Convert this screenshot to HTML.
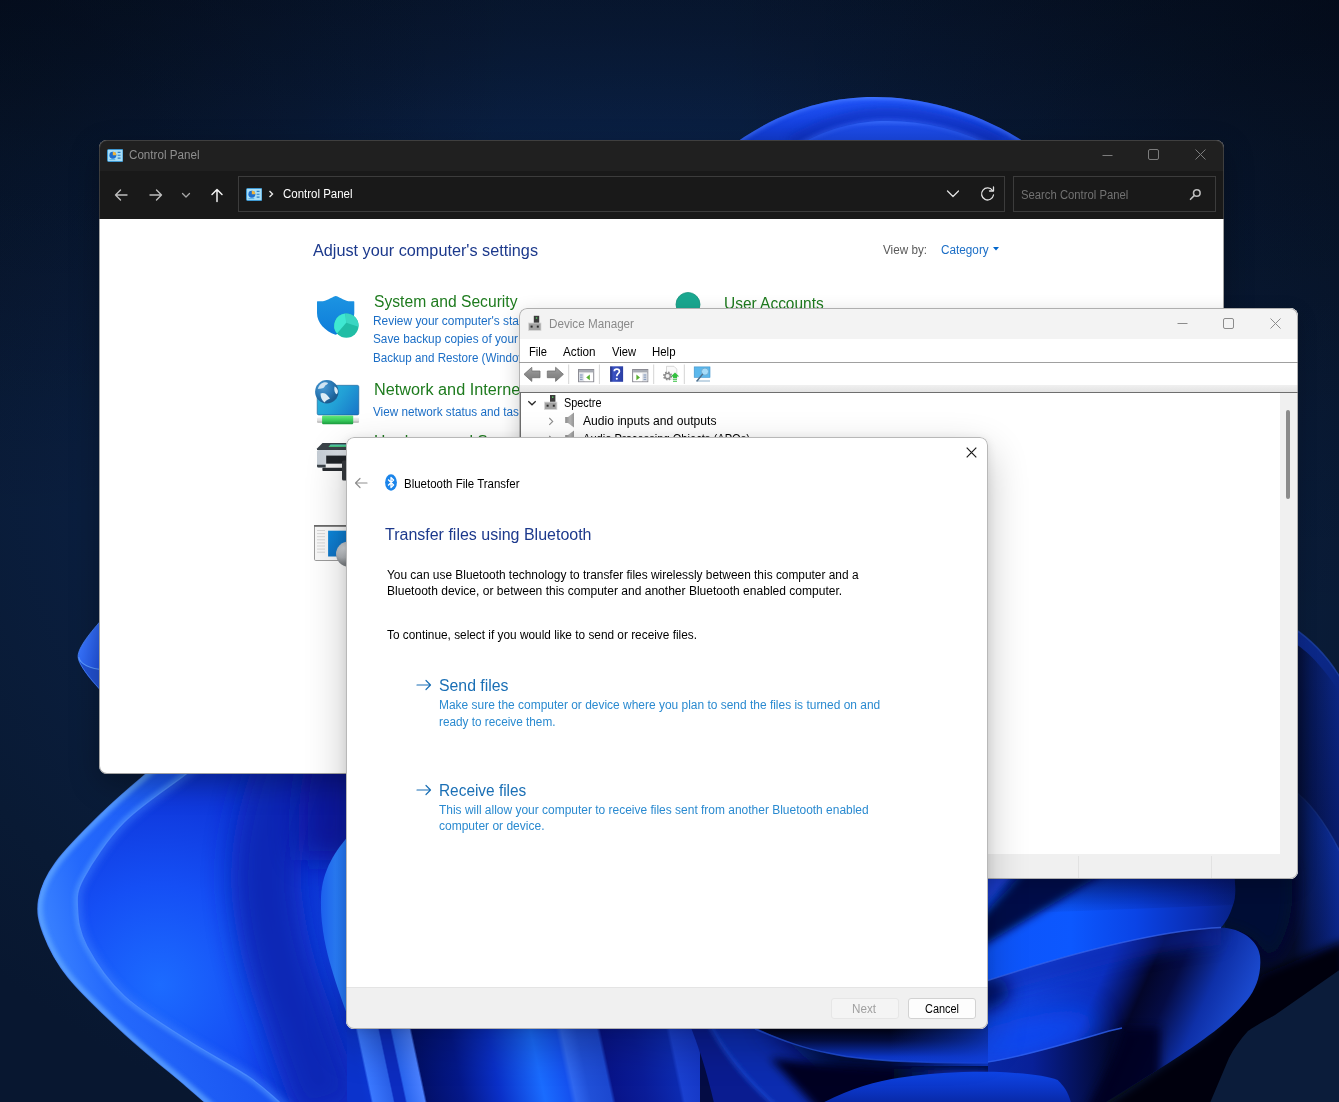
<!DOCTYPE html>
<html><head><meta charset="utf-8"><title>Desktop</title>
<style>
html,body{margin:0;padding:0;background:#05102a;}
body{width:1339px;height:1102px;overflow:hidden;font-family:"Liberation Sans",sans-serif;}
#desk{position:relative;width:1339px;height:1102px;overflow:hidden;}
.t{position:absolute;white-space:nowrap;display:inline-block;transform-origin:0 50%;font-family:"Liberation Sans",sans-serif;}
.win{position:absolute;overflow:hidden;box-sizing:border-box;}
.abs{position:absolute;}
#cp{left:99px;top:140px;width:1125px;height:634px;border-radius:8px;background:#fff;box-shadow:0 10px 30px rgba(0,0,0,.30);}
#dm{left:519px;top:308px;width:779px;height:571px;border-radius:8px;background:#fff;box-shadow:0 6px 20px rgba(0,0,0,.20);}
#dlg{left:346px;top:437px;width:641.500px;height:592px;border-radius:8px;background:#fff;box-shadow:0 16px 40px rgba(0,0,0,.24),0 2px 10px rgba(0,0,0,.10);}
.ring{position:absolute;left:0;top:0;right:0;bottom:0;border-radius:8px;pointer-events:none;}
#cp .ring{box-shadow:inset 0 0 0 1px rgba(90,90,90,.55);}
#dm .ring{box-shadow:inset 0 0 0 1px rgba(130,130,130,.60);}
#dlg .ring{box-shadow:inset 0 0 0 1px rgba(125,125,125,.55);}

</style></head>
<body>
<div id="desk">
<svg id="wall" width="1339" height="1102" viewBox="0 0 1339 1102" style="position:absolute;left:0;top:0">
<defs>
  <radialGradient id="bg" cx="640" cy="470" r="900" gradientUnits="userSpaceOnUse" gradientTransform="translate(640 470) scale(1 0.8) translate(-640 -470)">
    <stop offset="0" stop-color="#0d3068"/><stop offset="0.3" stop-color="#0b2856"/><stop offset="0.62" stop-color="#0a1e3e"/><stop offset="0.85" stop-color="#091a34"/><stop offset="1" stop-color="#081730"/>
  </radialGradient>
  <linearGradient id="bgtop" x1="0" y1="0" x2="0" y2="420" gradientUnits="userSpaceOnUse">
    <stop offset="0" stop-color="#01040c" stop-opacity="0.30"/><stop offset="0.35" stop-color="#01040c" stop-opacity="0.10"/><stop offset="1" stop-color="#01040c" stop-opacity="0"/>
  </linearGradient>
  <radialGradient id="bgcorner" cx="0" cy="0" r="520" gradientUnits="userSpaceOnUse">
    <stop offset="0" stop-color="#01040c" stop-opacity="0.36"/><stop offset="1" stop-color="#01040c" stop-opacity="0"/>
  </radialGradient>
  <radialGradient id="bgcorner2" cx="1339" cy="0" r="620" gradientUnits="userSpaceOnUse">
    <stop offset="0" stop-color="#01040c" stop-opacity="0.42"/><stop offset="1" stop-color="#01040c" stop-opacity="0"/>
  </radialGradient>
  <linearGradient id="topA" x1="0" y1="95" x2="0" y2="150" gradientUnits="userSpaceOnUse">
    <stop offset="0" stop-color="#3a70ff"/><stop offset="0.12" stop-color="#1f52f5"/><stop offset="0.6" stop-color="#1440dc"/><stop offset="1" stop-color="#0f36c4"/>
  </linearGradient>
  <linearGradient id="topB" x1="0" y1="119" x2="0" y2="150" gradientUnits="userSpaceOnUse">
    <stop offset="0" stop-color="#3568fa"/><stop offset="0.25" stop-color="#1d4ce8"/><stop offset="1" stop-color="#1642d8"/>
  </linearGradient>
  <linearGradient id="pl1" x1="36" y1="900" x2="200" y2="860" gradientUnits="userSpaceOnUse">
    <stop offset="0" stop-color="#3a82ff"/><stop offset="0.3" stop-color="#2469fc"/><stop offset="1" stop-color="#1a56f2"/>
  </linearGradient>
  <radialGradient id="pl2" cx="160" cy="985" r="250" gradientUnits="userSpaceOnUse">
    <stop offset="0" stop-color="#1c6bff"/><stop offset="0.4" stop-color="#154ff5"/><stop offset="0.75" stop-color="#0f38dc"/><stop offset="1" stop-color="#0b2bc0"/>
  </radialGradient>
  <!-- right group -->
  <linearGradient id="rA" x1="980" y1="0" x2="1240" y2="0" gradientUnits="userSpaceOnUse">
    <stop offset="0" stop-color="#0d54fa"/><stop offset="0.35" stop-color="#0c58ff"/><stop offset="0.6" stop-color="#0a44e6"/><stop offset="0.85" stop-color="#0a2cb0"/><stop offset="1" stop-color="#07207e"/>
  </linearGradient>
  <linearGradient id="rAv" x1="0" y1="876" x2="0" y2="915" gradientUnits="userSpaceOnUse">
    <stop offset="0" stop-color="#04105a" stop-opacity="0.65"/><stop offset="1" stop-color="#04105a" stop-opacity="0"/>
  </linearGradient>
  <linearGradient id="rC" x1="988" y1="960" x2="1217" y2="1063" gradientUnits="userSpaceOnUse">
    <stop offset="0" stop-color="#1646e0"/><stop offset="0.22" stop-color="#1240d8"/><stop offset="0.44" stop-color="#0c30c0"/><stop offset="0.55" stop-color="#061466"/><stop offset="0.61" stop-color="#03062a"/><stop offset="0.71" stop-color="#050c44"/><stop offset="0.855" stop-color="#0e30a8"/><stop offset="0.95" stop-color="#1640c0"/><stop offset="1" stop-color="#1a48cc"/>
  </linearGradient>
  <linearGradient id="rBshade" x1="0" y1="980" x2="0" y2="1062" gradientUnits="userSpaceOnUse">
    <stop offset="0" stop-color="#0a2cb8" stop-opacity="0.55"/><stop offset="0.35" stop-color="#0c48f0" stop-opacity="0"/><stop offset="0.8" stop-color="#0c4cf5" stop-opacity="0.6"/><stop offset="1" stop-color="#0c4cf5" stop-opacity="0.35"/>
  </linearGradient>
  <linearGradient id="ribbon" x1="0" y1="1028" x2="0" y2="1064" gradientUnits="userSpaceOnUse">
    <stop offset="0" stop-color="#020418"/><stop offset="0.35" stop-color="#04104a"/><stop offset="0.8" stop-color="#0c38d0"/><stop offset="1" stop-color="#1446e0"/>
  </linearGradient>
  <linearGradient id="under" x1="800" y1="0" x2="1110" y2="0" gradientUnits="userSpaceOnUse">
    <stop offset="0" stop-color="#020620"/><stop offset="0.3" stop-color="#020620"/><stop offset="0.5" stop-color="#0a2cb0"/><stop offset="0.75" stop-color="#082098"/><stop offset="1" stop-color="#020830"/>
  </linearGradient>
  <linearGradient id="strips" x1="346" y1="0" x2="720" y2="0" gradientUnits="userSpaceOnUse">
    <stop offset="0" stop-color="#0b33cc"/><stop offset="0.02" stop-color="#0b35d0"/><stop offset="0.026" stop-color="#3a78ff"/><stop offset="0.08" stop-color="#2a60e8"/><stop offset="0.084" stop-color="#0c2cc0"/><stop offset="0.112" stop-color="#0c2cc0"/><stop offset="0.117" stop-color="#2a66f0"/><stop offset="0.164" stop-color="#4a80ff"/><stop offset="0.170" stop-color="#02106a"/><stop offset="0.27" stop-color="#04188a"/><stop offset="0.37" stop-color="#0a30c8"/><stop offset="0.487" stop-color="#1a6cff"/><stop offset="0.555" stop-color="#1552f0"/><stop offset="0.57" stop-color="#3068f0"/><stop offset="0.61" stop-color="#2050d8"/><stop offset="0.665" stop-color="#1c48d0"/><stop offset="0.675" stop-color="#08148a"/><stop offset="0.76" stop-color="#0a1c98"/><stop offset="0.85" stop-color="#0c2ab0"/><stop offset="0.86" stop-color="#1a40d0"/><stop offset="0.925" stop-color="#1436c4"/><stop offset="0.935" stop-color="#0a1c90"/><stop offset="1" stop-color="#0a1c90"/>
  </linearGradient>
  <linearGradient id="rD1" x1="0" y1="620" x2="0" y2="830" gradientUnits="userSpaceOnUse"><stop offset="0" stop-color="#0c2a8c"/><stop offset="1" stop-color="#081c6c"/></linearGradient>
  <linearGradient id="rD2" x1="1339" y1="840" x2="1240" y2="960" gradientUnits="userSpaceOnUse"><stop offset="0" stop-color="#0c2e9c"/><stop offset="0.5" stop-color="#0a2484"/><stop offset="1" stop-color="#06165e"/></linearGradient>
  <linearGradient id="tipg" x1="78" y1="640" x2="104" y2="650" gradientUnits="userSpaceOnUse"><stop offset="0" stop-color="#3a78ff"/><stop offset="1" stop-color="#2458ea"/></linearGradient>
  <linearGradient id="smallp" x1="320" y1="0" x2="350" y2="0" gradientUnits="userSpaceOnUse"><stop offset="0" stop-color="#1c60f2"/><stop offset="0.5" stop-color="#2a80ff"/><stop offset="1" stop-color="#2478fa"/></linearGradient>
  <linearGradient id="rDsh" x1="1294" y1="0" x2="1338" y2="0" gradientUnits="userSpaceOnUse"><stop offset="0" stop-color="#020618" stop-opacity="0.8"/><stop offset="0.4" stop-color="#020618" stop-opacity="0.4"/><stop offset="1" stop-color="#020618" stop-opacity="0"/></linearGradient>
  <linearGradient id="rE" x1="0" y1="1072" x2="0" y2="1104" gradientUnits="userSpaceOnUse"><stop offset="0" stop-color="#0e44e4"/><stop offset="0.5" stop-color="#0b36c8"/><stop offset="1" stop-color="#0828a4"/></linearGradient>
  <linearGradient id="ribfade" x1="890" y1="0" x2="987" y2="0" gradientUnits="userSpaceOnUse"><stop offset="0" stop-color="#1040dc" stop-opacity="0"/><stop offset="1" stop-color="#1040dc" stop-opacity="0.75"/></linearGradient>
  <filter id="b2" filterUnits="userSpaceOnUse" x="-100" y="-100" width="1540" height="1300"><feGaussianBlur stdDeviation="2"/></filter>
  <filter id="b4" filterUnits="userSpaceOnUse" x="-100" y="-100" width="1540" height="1300"><feGaussianBlur stdDeviation="4"/></filter>
  <filter id="b8" filterUnits="userSpaceOnUse" x="-100" y="-100" width="1540" height="1300"><feGaussianBlur stdDeviation="8"/></filter>
  <filter id="b14" filterUnits="userSpaceOnUse" x="-100" y="-100" width="1540" height="1300"><feGaussianBlur stdDeviation="14"/></filter>
  <filter id="b24" filterUnits="userSpaceOnUse" x="-100" y="-100" width="1540" height="1300"><feGaussianBlur stdDeviation="24"/></filter>
  <clipPath id="clTop"><path d="M726 150 C 775 112 826 97 874 97 C 925 97 985 113 1036 150 Z"/></clipPath>
  <clipPath id="clStrips"><rect x="347" y="1000" width="400" height="120"/></clipPath>
  <clipPath id="clFan"><rect x="680" y="1000" width="308" height="120"/></clipPath>
  <clipPath id="cl1"><path d="M175.0 750.0 C 170.2 754.0 158.1 763.5 146.0 774.0 C 133.9 784.5 117.4 798.1 102.4 812.8 C 87.4 827.5 66.5 847.9 55.9 862.4 C 45.3 876.9 40.9 887.8 38.8 899.7 C 36.7 911.6 38.6 920.9 43.5 933.8 C 48.4 946.7 54.9 960.8 68.3 977.3 C 81.7 993.8 104.4 1015.0 124.1 1033.1 C 143.8 1051.2 172.8 1074.4 186.2 1085.9 C 199.6 1097.4 199.8 1097.7 204.8 1102.0 C 209.8 1106.3 214.1 1110.3 216.0 1112.0 L 720 1112 L 720 750 Z"/></clipPath>
  <clipPath id="clA"><path d="M980 870 L 1233 870 C 1236 885 1236 897 1233 905 C 1230 915 1226 922 1221 927.600 C 1168 930 1087 948 980 983 Z"/></clipPath>
  <clipPath id="cl2"><path d="M215.0 750.0 C 210.2 754.0 201.3 762.0 186.2 774.0 C 171.0 786.0 141.2 804.8 124.1 822.1 C 107.0 839.4 91.5 863.4 83.8 877.9 C 76.0 892.4 77.1 897.6 77.6 909.0 C 78.1 920.4 79.2 931.7 86.9 946.2 C 94.7 960.7 107.5 980.4 124.1 995.9 C 140.6 1011.4 165.5 1025.8 186.2 1039.3 C 206.9 1052.8 232.8 1066.1 248.3 1076.6 C 263.8 1087.0 272.2 1096.1 279.3 1102.0 C 286.4 1107.9 289.1 1110.3 291.0 1112.0 L 720 1112 L 720 750 Z"/></clipPath>
  <clipPath id="clC"><path d="M980 983 C 1087 948 1168 930 1221 927.600 C 1240 928 1258 940 1260 956 C 1262 975 1255 990 1248 999 C 1235 1015 1222 1026 1208 1036 C 1190 1050 1150 1075 1106 1102 L 1100 1112 L 980 1112 Z"/></clipPath>
</defs>
<rect width="1339" height="1102" fill="url(#bg)"/>
<rect width="1339" height="420" fill="url(#bgtop)"/>
<rect width="1339" height="1102" fill="url(#bgcorner)"/>
<rect width="1339" height="1102" fill="url(#bgcorner2)"/>
<!-- top bloom -->
<path d="M726 150 C 775 112 826 97 874 97 C 925 97 985 113 1036 150 Z" fill="url(#topA)"/>
<g clip-path="url(#clTop)">
<path d="M726 150 C 775 112 826 97 874 97 C 925 97 985 113 1036 150" fill="none" stroke="#4a7cff" stroke-width="4" filter="url(#b2)" opacity="0.8"/>
<path d="M790 150 C 825 128 858 121 887 121 C 925 121 962 130 1000 150" fill="none" stroke="#0c2cb0" stroke-width="12" filter="url(#b4)" opacity="0.55" transform="translate(0 -7)"/>
<path d="M790 150 C 825 128 858 121 887 121 C 925 121 962 130 1000 150 Z" fill="url(#topB)"/>
<path d="M790 150 C 825 128 858 121 887 121 C 925 121 962 130 1000 150" fill="none" stroke="#4676ff" stroke-width="1.800" filter="url(#b2)" opacity="0.7"/>
</g>
<!-- left small tip -->
<path d="M104 617 C 90 633 78.500 647 78.100 656 C 78 664 88 676 104 694 Z" fill="url(#tipg)"/>
<path d="M79.500 661 C 84 666 92 669 104 670 L 104 694 C 92 682 82 670 79.500 661 Z" fill="#2252d4"/>
<path d="M78.600 657 C 80 664 90 669 104 669.500" fill="none" stroke="#5a9aff" stroke-width="1.200"/>
<path d="M104 617 C 90 633 78.500 647 78.100 656 C 78 664 88 676 104 694" fill="none" stroke="#4a86ff" stroke-width="1" opacity="0.800"/>
<!-- ===== right group ===== -->
<!-- deep blue petal D at far right -->
<path d="M1292 627 C 1312 640 1330 658 1345 686 L 1345 1010 L 1225 1010 L 1225 860 L 1292 860 Z" fill="url(#rD1)"/>
<path d="M1292 627 C 1312 640 1330 658 1345 686" fill="none" stroke="#2044a8" stroke-width="1.500" opacity="0.7"/>
<path d="M1292 789 C 1312 803 1330 830 1345 862 L 1345 1010 L 1225 1010 L 1225 860 L 1292 860 Z" fill="url(#rD2)"/>
<path d="M1292 789 C 1312 803 1330 830 1345 862" fill="none" stroke="#2246ac" stroke-width="1.500" opacity="0.6"/>
<path d="M1290 640 C 1306 650 1320 662 1345 700 L 1345 1010 L 1225 1010 L 1225 860 L 1290 860 Z" fill="url(#rDsh)"/>
<path d="M1225 860 L 1290 860 C 1296 900 1292 935 1268 962 C 1262 940 1245 928 1215 927 Z" fill="#030a34" filter="url(#b8)"/>
<!-- dark shadow band and bg polygon -->
<path d="M1345 940 L 1262 975 L 1208 1036 L 1100 1110 L 1345 1110 Z" fill="#02040e" filter="url(#b4)"/>
<path d="M1345 966 L 1275 1015 C 1262 1022 1252 1028 1248 1031 C 1240 1040 1234 1048 1229 1058 L 1207 1110 L 1345 1110 Z" fill="#0b1c3a"/>
<!-- cone + B surface -->
<g clip-path="url(#clC)">
  <rect x="970" y="900" width="320" height="220" fill="url(#rC)"/>
  <path d="M970 990 C 1087 955 1168 937 1221 934" fill="none" stroke="#0a2ab0" stroke-width="22" filter="url(#b8)" opacity="0.55"/>
  <ellipse cx="984" cy="995" rx="26" ry="16" fill="#040e5a" filter="url(#b8)" opacity="0.85" transform="rotate(-18 984 995)"/>
  <ellipse cx="1025" cy="1038" rx="75" ry="20" fill="#0c4cf5" filter="url(#b14)" opacity="0.9" transform="rotate(-14 1025 1038)"/>
  <!-- underside of B rim -->
  <path d="M970 1065 C 1000 1062 1047 1050 1109 1031 L 1122 1028 L 1135 1040 L 1100 1112 L 970 1112 Z" fill="url(#under)"/>
  <path d="M1122 1028 C 1118 1050 1100 1085 1085 1112 L 1160 1112 L 1160 1028 Z" fill="#020620" filter="url(#b4)" opacity="0.9"/>
  <!-- petal E -->
  <path d="M806 1112 C 840 1092 870 1082 901 1077.500 C 940 1072 975 1071 1005 1072.200 C 1030 1074 1048 1076 1057.600 1080 C 1066 1088 1070 1095 1073 1112 Z" fill="url(#rE)"/>
</g>
<path d="M980 1063 C 1000 1061 1047 1049.600 1109 1031 L 1122 1028" fill="none" stroke="#2f62f0" stroke-width="1.500" opacity="0.8"/>
<!-- petal A top -->
<path d="M980 870 L 1233 870 C 1236 885 1236 897 1233 905 C 1230 915 1226 922 1221 927.600 C 1168 930 1087 948 980 983 Z" fill="url(#rA)"/>
<path d="M980 870 L 1233 870 C 1236 885 1236 897 1233 905 L 980 915 Z" fill="url(#rAv)"/>
<g clip-path="url(#clA)">
<path d="M970 929 L 970 953 C 1010 930 1060 900 1112 868 L 1028 868 Z" fill="#030b4a" filter="url(#b4)"/>
<path d="M970 860 L 1026 860 L 970 920 Z" fill="#1a40d8" filter="url(#b2)"/>
</g>
<path d="M980 983 C 1087 948 1168 930 1221 927.600" fill="none" stroke="#3a66f0" stroke-width="1.500" opacity="0.7"/>
<!-- ===== bottom-left big petals ===== -->
<path d="M175.0 750.0 C 170.2 754.0 158.1 763.5 146.0 774.0 C 133.9 784.5 117.4 798.1 102.4 812.8 C 87.4 827.5 66.5 847.9 55.9 862.4 C 45.3 876.9 40.9 887.8 38.8 899.7 C 36.7 911.6 38.6 920.9 43.5 933.8 C 48.4 946.7 54.9 960.8 68.3 977.3 C 81.7 993.8 104.4 1015.0 124.1 1033.1 C 143.8 1051.2 172.8 1074.4 186.2 1085.9 C 199.6 1097.4 199.8 1097.7 204.8 1102.0 C 209.8 1106.3 214.1 1110.3 216.0 1112.0 L 720 1112 L 720 750 Z" fill="url(#pl1)"/>
<g clip-path="url(#cl1)"><path d="M175.0 750.0 C 170.2 754.0 158.1 763.5 146.0 774.0 C 133.9 784.5 117.4 798.1 102.4 812.8 C 87.4 827.5 66.5 847.9 55.9 862.4 C 45.3 876.9 40.9 887.8 38.8 899.7 C 36.7 911.6 38.6 920.9 43.5 933.8 C 48.4 946.7 54.9 960.8 68.3 977.3 C 81.7 993.8 104.4 1015.0 124.1 1033.1 C 143.8 1051.2 172.8 1074.4 186.2 1085.9 C 199.6 1097.4 199.8 1097.7 204.8 1102.0 C 209.8 1106.3 214.1 1110.3 216.0 1112.0" fill="none" stroke="#62a8ff" stroke-width="9" filter="url(#b2)" opacity="0.75"/></g>
<path d="M175.0 750.0 C 170.2 754.0 158.1 763.5 146.0 774.0 C 133.9 784.5 117.4 798.1 102.4 812.8 C 87.4 827.5 66.5 847.9 55.9 862.4 C 45.3 876.9 40.9 887.8 38.8 899.7 C 36.7 911.6 38.6 920.9 43.5 933.8 C 48.4 946.7 54.9 960.8 68.3 977.3 C 81.7 993.8 104.4 1015.0 124.1 1033.1 C 143.8 1051.2 172.8 1074.4 186.2 1085.9 C 199.6 1097.4 199.8 1097.7 204.8 1102.0 C 209.8 1106.3 214.1 1110.3 216.0 1112.0" fill="none" stroke="#4f90ff" stroke-width="1.500" opacity="0.8"/>
<g clip-path="url(#cl1)"><path d="M215.0 750.0 C 210.2 754.0 201.3 762.0 186.2 774.0 C 171.0 786.0 141.2 804.8 124.1 822.1 C 107.0 839.4 91.5 863.4 83.8 877.9 C 76.0 892.4 77.1 897.6 77.6 909.0 C 78.1 920.4 79.2 931.7 86.9 946.2 C 94.7 960.7 107.5 980.4 124.1 995.9 C 140.6 1011.4 165.5 1025.8 186.2 1039.3 C 206.9 1052.8 232.8 1066.1 248.3 1076.6 C 263.8 1087.0 272.2 1096.1 279.3 1102.0 C 286.4 1107.9 289.1 1110.3 291.0 1112.0" fill="none" stroke="#5aa0ff" stroke-width="7" filter="url(#b2)" opacity="0.55"/></g>
<path d="M215.0 750.0 C 210.2 754.0 201.3 762.0 186.2 774.0 C 171.0 786.0 141.2 804.8 124.1 822.1 C 107.0 839.4 91.5 863.4 83.8 877.9 C 76.0 892.4 77.1 897.6 77.6 909.0 C 78.1 920.4 79.2 931.7 86.9 946.2 C 94.7 960.7 107.5 980.4 124.1 995.9 C 140.6 1011.4 165.5 1025.8 186.2 1039.3 C 206.9 1052.8 232.8 1066.1 248.3 1076.6 C 263.8 1087.0 272.2 1096.1 279.3 1102.0 C 286.4 1107.9 289.1 1110.3 291.0 1112.0 L 720 1112 L 720 750 Z" fill="url(#pl2)"/>
<g clip-path="url(#cl2)">
  <path d="M300 740 C 275 800 262 850 267 897 C 272 945 285 985 296 1014 C 305 1045 318 1075 330 1112" fill="none" stroke="#0a25b4" stroke-width="70" filter="url(#b14)" opacity="0.95"/>
  <path d="M360 740 L 360 860 L 300 860 C 295 820 300 780 310 740 Z" fill="#08179a" filter="url(#b14)" opacity="0.9"/>
  <path d="M215.0 750.0 C 210.2 754.0 201.3 762.0 186.2 774.0 C 171.0 786.0 141.2 804.8 124.1 822.1 C 107.0 839.4 91.5 863.4 83.8 877.9 C 76.0 892.4 77.1 897.6 77.6 909.0 C 78.1 920.4 79.2 931.7 86.9 946.2 C 94.7 960.7 107.5 980.4 124.1 995.9 C 140.6 1011.4 165.5 1025.8 186.2 1039.3 C 206.9 1052.8 232.8 1066.1 248.3 1076.6 C 263.8 1087.0 272.2 1096.1 279.3 1102.0 C 286.4 1107.9 289.1 1110.3 291.0 1112.0" fill="none" stroke="#3f82ff" stroke-width="6" filter="url(#b4)" opacity="0.8"/>
</g>
<path d="M215.0 750.0 C 210.2 754.0 201.3 762.0 186.2 774.0 C 171.0 786.0 141.2 804.8 124.1 822.1 C 107.0 839.4 91.5 863.4 83.8 877.9 C 76.0 892.4 77.1 897.6 77.6 909.0 C 78.1 920.4 79.2 931.7 86.9 946.2 C 94.7 960.7 107.5 980.4 124.1 995.9 C 140.6 1011.4 165.5 1025.8 186.2 1039.3 C 206.9 1052.8 232.8 1066.1 248.3 1076.6 C 263.8 1087.0 272.2 1096.1 279.3 1102.0 C 286.4 1107.9 289.1 1110.3 291.0 1112.0" fill="none" stroke="#4f90ff" stroke-width="1.200" opacity="0.8"/>
<!-- small petal by dialog left edge -->
<path d="M350 834 C 336 850 322 870 321 897 C 320 925 326 950 332 970 C 338 990 345 1010 356 1036 L 356 834 Z" fill="url(#smallp)"/>
<!-- ===== bottom centre strips ===== -->
<g clip-path="url(#clStrips)"><g transform="translate(0 1020) skewX(12) translate(0 -1020)">
  <rect x="330" y="1020" width="400" height="90" fill="url(#strips)"/>
</g></g>
<g clip-path="url(#clFan)">
<!-- fan petals right of strips -->
<rect x="700" y="1020" width="300" height="90" fill="#040c44"/>
<path d="M688 1020 C 700 1050 708 1075 716 1112 L 790 1112 C 760 1080 730 1060 707 1020 Z" fill="#0a1c90"/>
<path d="M707 1020 C 722 1050 745 1080 782 1112 L 900 1112 L 900 1020 Z" fill="#0c2cb0"/>
<path d="M760 1020 C 800 1050 830 1080 860 1112 L 1000 1112 L 1000 1020 Z" fill="#020a40" filter="url(#b14)"/>
<path d="M707 1020 C 722 1050 745 1080 782 1112" fill="none" stroke="#1a48d0" stroke-width="3" filter="url(#b2)"/>
<!-- ribbon (B continuation under dialog) -->
<path d="M750 1024 C 765 1033 790 1045 828 1053 C 850 1058 880 1061 920 1062 C 950 1063 970 1063 992 1063 L 992 1024 Z" fill="url(#ribbon)"/>
<path d="M755 1029 C 775 1037 800 1048 828 1053 C 850 1058 880 1061 920 1062 C 950 1063 970 1063 992 1063" fill="none" stroke="#2454e0" stroke-width="1.500" opacity="0.8"/>
<path d="M770 1058 C 850 1068 900 1070 990 1070 L 990 1112 L 820 1112 Z" fill="url(#under)" filter="url(#b4)"/>
<path d="M806 1112 C 840 1092 870 1082 901 1077.500 C 940 1072 975 1071 1005 1072.200 C 1030 1074 1048 1076 1057.600 1080 C 1066 1088 1070 1095 1073 1112 Z" fill="url(#rE)"/>
<rect x="880" y="1024" width="110" height="42" fill="url(#ribfade)"/>
</g>
</svg>

<div id="cp" class="win">
  <div class="abs" style="left:0;top:0;width:1125px;height:31px;background:#202020"></div>
  <div class="abs" style="left:0;top:30.500px;width:1125px;height:48px;background:#191919"></div>
  <!-- title icon -->
  <svg class="abs" style="left:7.500px;top:8.500px" width="16.500" height="13" viewBox="0 0 17 13.500">
    <rect x="0.5" y="0.5" width="16" height="12.5" rx="1" fill="#a8def7" stroke="#3b9ad6"/>
    <circle cx="6" cy="6.5" r="3.6" fill="#1c6fd0"/><path d="M6 6.5 L6 2.9 A3.6 3.6 0 0 1 9.6 6.5 Z" fill="#f2b53a"/>
    <path d="M11 3.5h3M11 6.5h3M11 9.5h3" stroke="#2b7fc8" stroke-width="1.2"/><path d="M2.5 11h6" stroke="#5bb3e6" stroke-width="1"/>
  </svg>
  <!-- window controls -->
  <svg class="abs" style="left:998px;top:4px" width="120" height="22" viewBox="0 0 120 22" fill="none" stroke="#7c7c7c" stroke-width="1">
    <path d="M5.5 11.5h10"/><rect x="51.5" y="5.5" width="10" height="10" rx="1.5"/><path d="M98.5 5.5l10 10M108.5 5.5l-10 10"/>
  </svg>
  <!-- nav arrows -->
  <svg class="abs" style="left:10px;top:42.500px" width="125" height="24" viewBox="0 0 125 24" fill="none" stroke-linecap="round" stroke-linejoin="round">
    <path d="M18 12H6.5M11.5 7l-5 5 5 5" stroke="#bdbdbd" stroke-width="1.4"/>
    <path d="M41 12h11.5M47.5 7l5 5-5 5" stroke="#bdbdbd" stroke-width="1.4"/>
    <path d="M73.5 10.5l3.5 3.5 3.500-3.500" stroke="#a8a8a8" stroke-width="1.3"/>
    <path d="M108 18.500V6.500M103 11.500l5-5 5 5" stroke="#f2f2f2" stroke-width="1.5"/>
  </svg>
  <!-- address box -->
  <div class="abs" style="left:139px;top:36px;width:767px;height:36px;box-sizing:border-box;border:1px solid #3c3c3c;background:#191919"></div>
  <svg class="abs" style="left:146.500px;top:47.500px" width="16.500" height="13" viewBox="0 0 17 13.500">
    <rect x="0.5" y="0.5" width="16" height="12.5" rx="1" fill="#a8def7" stroke="#3b9ad6"/>
    <circle cx="6" cy="6.500" r="3.600" fill="#1c6fd0"/><path d="M6 6.500 L6 2.900 A3.600 3.600 0 0 1 9.600 6.500 Z" fill="#f2b53a"/>
    <path d="M11 3.500h3M11 6.500h3M11 9.500h3" stroke="#2b7fc8" stroke-width="1.2"/><path d="M2.500 11h6" stroke="#5bb3e6" stroke-width="1"/>
  </svg>
  <svg class="abs" style="left:168px;top:49px" width="8" height="10" viewBox="0 0 8 10" fill="none" stroke="#e6e6e6" stroke-width="1.4"><path d="M2.500 2l3 3-3 3"/></svg>
  <svg class="abs" style="left:846px;top:46px" width="60" height="16" viewBox="0 0 60 16" fill="none" stroke="#e0e0e0" stroke-width="1.300" stroke-linecap="round" stroke-linejoin="round">
    <path d="M2.500 5l5.500 5.500L13.500 5"/>
    <path d="M47.500 4.500A6 6 0 1 0 48.500 9"/><path d="M48.500 1v4h-4" />
  </svg>
  <!-- search box -->
  <div class="abs" style="left:914px;top:36px;width:203px;height:36px;box-sizing:border-box;border:1px solid #3c3c3c;background:#191919"></div>
  <svg class="abs" style="left:1090px;top:48px" width="13" height="13" viewBox="0 0 13 13" fill="none" stroke="#bdbdbd" stroke-width="1.600"><circle cx="7.800" cy="5" r="3.300"/><path d="M5.400 7.400L1.500 11.300" stroke-linecap="round"/></svg>
  <!-- category arrow -->
  <svg class="abs" style="left:894px;top:107px" width="6" height="4" viewBox="0 0 6 4"><path d="M0 0h6L3 3.500z" fill="#0066cc"/></svg>

  <!-- shield icon : page (317,296)-(359,338) -> rel (218,156) -->
  <svg class="abs" style="left:216px;top:154px" width="46" height="46" viewBox="315 294 46 46">
    <defs><linearGradient id="shg" x1="0" y1="296" x2="0" y2="335" gradientUnits="userSpaceOnUse"><stop offset="0" stop-color="#1c94e2"/><stop offset="1" stop-color="#0e7cd9"/></linearGradient></defs>
    <path d="M335.800 295.900 C 331 297.200 326.500 301.300 321 301.300 L 317.500 301.300 C 317.200 301.300 317 301.500 317 301.800 L 317 313 C 317 323 325 331 335.500 334.800 C 346 331 354.300 323 354.300 313 L 354.300 301.800 C 354.300 301.500 354.100 301.300 353.800 301.300 L 350.500 301.300 C 345 301.300 340.500 297.200 335.800 295.900 Z" fill="url(#shg)"/>
    <circle cx="346.400" cy="325.600" r="12.200" fill="#20bda5"/>
    <path d="M346.200 322.800 L 345.400 313.450 A12.200 12.200 0 0 0 337 333.400 Z" fill="#3fe8d2"/>
    <path d="M346.200 322.800 L 345.400 313.450 A12.200 12.200 0 0 1 358.500 326.800 Z" fill="#3ad6c2"/>
  </svg>
  <!-- network icon -->
  <svg class="abs" style="left:214px;top:238px" width="48" height="50" viewBox="313 378 48 50">
    <defs>
      <linearGradient id="mong" x1="317" y1="385" x2="359" y2="415" gradientUnits="userSpaceOnUse"><stop offset="0" stop-color="#2bb8de"/><stop offset="0.5" stop-color="#22a0d6"/><stop offset="1" stop-color="#1874c8"/></linearGradient>
      <linearGradient id="grng" x1="0" y1="415.500" x2="0" y2="424.200" gradientUnits="userSpaceOnUse"><stop offset="0" stop-color="#62ea7a"/><stop offset="0.6" stop-color="#36c85a"/><stop offset="1" stop-color="#1c9a3e"/></linearGradient>
      <linearGradient id="pipeg" x1="0" y1="417.400" x2="0" y2="422.800" gradientUnits="userSpaceOnUse"><stop offset="0" stop-color="#f0f0f0"/><stop offset="0.6" stop-color="#dcdcdc"/><stop offset="1" stop-color="#a8a8a8"/></linearGradient>
      <radialGradient id="globeg" cx="323" cy="387" r="16" gradientUnits="userSpaceOnUse"><stop offset="0" stop-color="#4a9ad4"/><stop offset="0.6" stop-color="#2a78b4"/><stop offset="1" stop-color="#1c5c90"/></radialGradient>
    </defs>
    <rect x="317" y="417.400" width="42" height="5.400" rx="1" fill="url(#pipeg)"/>
    <rect x="322.100" y="415.500" width="31.100" height="8.700" rx="1" fill="url(#grng)"/>
    <rect x="317.200" y="385.300" width="41.600" height="29.600" rx="1.500" fill="url(#mong)" stroke="#1a5c94" stroke-width="0.600"/>
    <circle cx="326.800" cy="391.800" r="11.700" fill="url(#globeg)"/>
    <path d="M320.500 393.500 c 2.500 -1.200 5 -0.300 6.500 1.600 l 3 3.500 c -2 1 -4 2 -5.500 3.800 c -2.500 -2 -4 -5 -4 -8.900 z" fill="#dcecf6"/>
    <path d="M334.500 386.500 c 1.600 0.500 2.800 2 3.300 4 c 0.300 1.800 -0.300 3.200 -1.300 3.800 c -1.500 -1.200 -2.800 -3.800 -2 -7.800 z" fill="#dcecf6"/>
    <path d="M317.800 389 c 0.600 -2.800 2.600 -5.200 5.600 -6.400 c 1.800 -0.600 3.400 -0.400 4.600 0.400 c -0.400 1.400 -1.600 2 -2.800 2.400 c -0.600 1.400 -1.400 2.400 -2.800 2.800 c -1.600 0.600 -3 0.400 -4.600 0.800 z" fill="#dcecf6" opacity="0.920"/>
  </svg>
  <!-- printer icon -->
  <svg class="abs" style="left:216px;top:300px" width="44" height="44" viewBox="315 440 44 44">
    <defs><linearGradient id="prg" x1="0" y1="444" x2="0" y2="447" gradientUnits="userSpaceOnUse"><stop offset="0" stop-color="#56d4d4"/><stop offset="1" stop-color="#42ba66"/></linearGradient>
    <linearGradient id="prb" x1="317" y1="0" x2="350" y2="0" gradientUnits="userSpaceOnUse"><stop offset="0" stop-color="#c4ccd4"/><stop offset="1" stop-color="#e2e6ea"/></linearGradient></defs>
    <path d="M317 450.100 L 317 448.500 L 322.500 443 L 352 443 L 357 448.500 L 357 450.100 Z" fill="#3a4248"/>
    <path d="M328.400 446.900 L 330.500 444.400 L 348 444.400 L 349.500 446.900 Z" fill="url(#prg)"/>
    <rect x="317" y="450.100" width="40" height="17.400" rx="1.500" fill="url(#prb)"/>
    <path d="M317 464.800 h40 v1.200 a1.500 1.500 0 0 1 -1.500 1.500 h-37 a1.500 1.500 0 0 1 -1.500 -1.500 z" fill="#3a4248"/>
    <rect x="326.200" y="455.600" width="24" height="8.200" fill="#202428"/>
    <rect x="325.700" y="463.800" width="22" height="4.200" fill="#f4f4f4"/>
    <rect x="322.400" y="467.800" width="26" height="3.300" rx="0.800" fill="#282c30"/>
    <rect x="342" y="460.500" width="8" height="20.100" rx="1.500" fill="#383c40"/>
  </svg>
  <!-- programs icon -->
  <svg class="abs" style="left:213px;top:383px" width="50" height="46" viewBox="312 523 50 46">
    <defs><linearGradient id="pgb" x1="328" y1="530" x2="350" y2="556" gradientUnits="userSpaceOnUse"><stop offset="0" stop-color="#0c88dc"/><stop offset="1" stop-color="#126cbc"/></linearGradient>
    <radialGradient id="pgd" cx="344" cy="548" r="16" gradientUnits="userSpaceOnUse"><stop offset="0" stop-color="#d4d8dc"/><stop offset="0.6" stop-color="#b4b8bc"/><stop offset="1" stop-color="#808488"/></radialGradient></defs>
    <rect x="314.500" y="525.500" width="42" height="35" rx="1.200" fill="#f8f8f8" stroke="#9c9c9c"/>
    <rect x="314" y="525" width="43" height="1.800" fill="#6a6a6a"/>
    <path d="M317 530.500h8M317 533.600h8M317 536.700h8M317 539.800h8M317 542.900h8M317 546h8M317 549.100h8M317 552.200h8" stroke="#d2d2d2" stroke-width="0.900"/>
    <rect x="328.100" y="530.700" width="24" height="25.800" fill="url(#pgb)"/>
    <circle cx="348.500" cy="554.100" r="12.500" fill="url(#pgd)"/>
  </svg>
  <!-- user accounts icon (teal head) -->
  <svg class="abs" style="left:574px;top:150px" width="30" height="40" viewBox="673 290 30 40">
    <circle cx="688" cy="304.500" r="12" fill="#1aa890"/>
    <circle cx="688" cy="304.500" r="12" fill="none" stroke="#16947e" stroke-width="0.800"/>
  </svg>

<span class="t" style="left:29.5px;top:8.0px;font-size:12px;line-height:15px;color:#8e8e8e;transform:scaleX(0.9695)">Control Panel</span>
<span class="t" style="left:183.5px;top:47.0px;font-size:12px;line-height:15px;color:#ffffff;transform:scaleX(0.9557)">Control Panel</span>
<span class="t" style="left:921.7px;top:48.0px;font-size:12px;line-height:15px;color:#727272;transform:scaleX(0.9406)">Search Control Panel</span>
<span class="t" style="left:213.5px;top:100.5px;font-size:16px;line-height:20px;color:#1c398c;transform:scaleX(1.0143)">Adjust your computer&#x27;s settings</span>
<span class="t" style="left:784.2px;top:103.0px;font-size:12px;line-height:15px;color:#5a5a5a;transform:scaleX(0.9747)">View by:</span>
<span class="t" style="left:841.5px;top:103.0px;font-size:12px;line-height:15px;color:#1b6ec6;transform:scaleX(0.9794)">Category</span>
<span class="t" style="left:274.5px;top:152.0px;font-size:16px;line-height:20px;color:#1e7b1e;transform:scaleX(0.9780)">System and Security</span>
<span class="t" style="left:273.9px;top:174.3px;font-size:12px;line-height:15px;color:#1b6ec6;transform:scaleX(0.9930)">Review your computer&#x27;s status</span>
<span class="t" style="left:273.9px;top:192.3px;font-size:12px;line-height:15px;color:#1b6ec6;transform:scaleX(0.9830)">Save backup copies of your files with File History</span>
<span class="t" style="left:273.9px;top:211.3px;font-size:12px;line-height:15px;color:#1b6ec6;transform:scaleX(0.9690)">Backup and Restore (Windows 7)</span>
<span class="t" style="left:274.7px;top:240.0px;font-size:16px;line-height:20px;color:#1e7b1e;transform:scaleX(1.0150)">Network and Internet</span>
<span class="t" style="left:273.9px;top:265.3px;font-size:12px;line-height:15px;color:#1b6ec6;transform:scaleX(0.9780)">View network status and tasks</span>
<span class="t" style="left:275.0px;top:291.5px;font-size:16px;line-height:20px;color:#1e7b1e;transform:scaleX(0.9850)">Hardware and Sound</span>
<span class="t" style="left:625.3px;top:154.2px;font-size:16px;line-height:20px;color:#1e7b1e;transform:scaleX(0.9665)">User Accounts</span>
  <div class="ring"></div>
</div>

<div id="dm" class="win">
  <div class="abs" style="left:0;top:0;width:779px;height:31px;background:#f3f3f3"></div>
  <div class="abs" style="left:0;top:31px;width:779px;height:23px;background:#fff"></div>
  <div class="abs" style="left:0;top:53.5px;width:779px;height:1px;background:#a0a0a0"></div>
  <div class="abs" style="left:0;top:54.5px;width:779px;height:23px;background:#fff"></div>
  <div class="abs" style="left:0;top:77px;width:779px;height:7px;background:linear-gradient(#f0f0f0,#e3e3e3)"></div>
  <div class="abs" style="left:0;top:83.500px;width:779px;height:1.500px;background:#6e6e6e"></div>
  <!-- scrollbar -->
  <div class="abs" style="left:761px;top:85px;width:18px;height:461px;background:#f0f0f0"></div>
  <div class="abs" style="left:767px;top:102px;width:4px;height:89px;border-radius:2px;background:#8b8b8b"></div>
  <!-- status bar -->
  <div class="abs" style="left:0;top:546px;width:779px;height:25px;background:#f0f0f0"></div>
  <div class="abs" style="left:558.500px;top:548px;width:1px;height:22px;background:#e2e2e2"></div>
  <div class="abs" style="left:691.500px;top:548px;width:1px;height:22px;background:#e2e2e2"></div>
  <!-- window controls -->
  <svg class="abs" style="left:653px;top:4px" width="120" height="22" viewBox="0 0 120 22" fill="none" stroke="#8c8c8c" stroke-width="1">
    <path d="M5.500 11.500h10"/><rect x="51.500" y="6.500" width="10" height="10" rx="1.500"/><path d="M98.500 6.500l10 10M108.500 6.500l-10 10"/>
  </svg>

  <!-- title icon -->
  <svg class="abs" style="left:8px;top:6px" width="16" height="18" viewBox="527 314 16 18">
    <rect x="533.800" y="315.800" width="5.400" height="7.600" fill="#3c3c3c"/><rect x="535.800" y="317.200" width="1.400" height="1.600" fill="#55c060"/>
    <rect x="528.600" y="323" width="12.400" height="7.400" fill="#a2a2a2" stroke="#d6d6d6" stroke-width="0.800"/>
    <rect x="530.600" y="325.600" width="2" height="2" fill="#2c2c2c"/><rect x="536.800" y="325.600" width="2" height="2" fill="#2c2c2c"/>
  </svg>
  <!-- tree left border -->
  <div class="abs" style="left:0.500px;top:84px;width:1.800px;height:462px;background:#6e6e6e"></div>
  <!-- toolbar -->
  <svg class="abs" style="left:0;top:55px" width="210" height="23" viewBox="519 363 210 23">
    <defs>
      <linearGradient id="arg" x1="0" y1="367" x2="0" y2="382" gradientUnits="userSpaceOnUse"><stop offset="0" stop-color="#a4a4a4"/><stop offset="0.5" stop-color="#8a8a8a"/><stop offset="1" stop-color="#787878"/></linearGradient>
      <linearGradient id="qg" x1="610" y1="0" x2="623" y2="0" gradientUnits="userSpaceOnUse"><stop offset="0" stop-color="#1a2878"/><stop offset="0.25" stop-color="#3c54c4"/><stop offset="1" stop-color="#2a3ea4"/></linearGradient>
    </defs>
    <path d="M524 374.300 L 531.800 367.300 L 531.800 371 L 540 371 L 540 377.700 L 531.800 377.700 L 531.800 381.400 Z" fill="url(#arg)" stroke="#707070" stroke-width="0.800" stroke-linejoin="round"/>
    <path d="M563.400 374.300 L 555.600 367.300 L 555.600 371 L 547.300 371 L 547.300 377.700 L 555.600 377.700 L 555.600 381.400 Z" fill="url(#arg)" stroke="#707070" stroke-width="0.800" stroke-linejoin="round"/>
    <path d="M568.700 364.500V384M599.400 364.500V384M653.700 364.500V384M684.300 364.500V384" stroke="#d4d4d4" stroke-width="1"/>
    <!-- icon3 -->
    <rect x="578.500" y="369.500" width="15.200" height="12.200" fill="#f4f4f4" stroke="#8c8c94" stroke-width="1"/>
    <rect x="579" y="370" width="14.200" height="2.400" fill="#a8acb4"/>
    <rect x="579" y="373.400" width="4.600" height="7.800" fill="#d8dce4"/>
    <path d="M580 375h2.600M580 377.200h2.600M580 379.400h2.600" stroke="#6a86b0" stroke-width="0.800"/>
    <rect x="584.400" y="373.400" width="8.600" height="7.800" fill="#fff"/>
    <path d="M589.800 374.600 L 586.200 377.400 L 589.800 380.200 Z" fill="#58b030"/>
    <!-- ? -->
    <rect x="610.100" y="366.300" width="13" height="15.500" fill="url(#qg)"/>
    <path d="M614.300 371.200 C 614.300 368.600 619.400 368.400 619.400 371.400 C 619.400 373.400 616.800 373.600 616.800 376.200" fill="none" stroke="#fff" stroke-width="1.700"/><circle cx="616.800" cy="378.700" r="1.050" fill="#fff"/>
    <!-- icon5 -->
    <rect x="632.600" y="369.500" width="15.200" height="12.200" fill="#f4f4f4" stroke="#8c8c94" stroke-width="1"/>
    <rect x="633.100" y="370" width="14.200" height="2.400" fill="#a8acb4"/>
    <rect x="642.600" y="373.400" width="4.700" height="7.800" fill="#d8dce4"/>
    <path d="M643.600 375h2.600M643.600 377.200h2.600M643.600 379.400h2.600" stroke="#6a86b0" stroke-width="0.800"/>
    <rect x="633.600" y="373.400" width="8.400" height="7.800" fill="#fff"/>
    <path d="M636.400 374.600 L 640 377.400 L 636.400 380.200 Z" fill="#58b030"/>
    <!-- icon6 gear doc -->
    <path d="M666.500 366.300 h7.500 l2.800 2.800 v10 h-10.300 z" fill="#fafafa" stroke="#c8c8c8" stroke-width="0.700"/>
    <circle cx="667.600" cy="376" r="3.500" fill="none" stroke="#8e8e8e" stroke-width="2.200" stroke-dasharray="1.500 1.250"/>
    <circle cx="667.600" cy="376" r="2.700" fill="#f4f4f4" stroke="#8a8a8a" stroke-width="1.300"/>
    <path d="M675 372.600 L 679.200 376.600 L 677 376.600 L 677 378 L 673 378 L 673 376.600 L 670.800 376.600 Z" fill="#34c040"/>
    <path d="M673 379.300h4M673 381.200h4" stroke="#34c040" stroke-width="1.100"/>
    <!-- icon7 monitor + magnifier -->
    <rect x="694.200" y="366.900" width="15.800" height="10.400" fill="#5cb8ec" stroke="#3a90cc" stroke-width="0.600"/>
    <path d="M696 381h14" stroke="#8ab0cc" stroke-width="1.200"/>
    <circle cx="705" cy="371.600" r="3.600" fill="#a8dcf8" stroke="#6aa8d0" stroke-width="0.900"/>
    <path d="M702.400 374.400 L 697.200 380.800" stroke="#50708c" stroke-width="1.500" stroke-linecap="round"/>
  </svg>
  <!-- tree icons -->
  <svg class="abs" style="left:6px;top:86px" width="60" height="46" viewBox="525 394 60 46">
    <defs><linearGradient id="spk" x1="565" y1="0" x2="575" y2="0" gradientUnits="userSpaceOnUse"><stop offset="0" stop-color="#8a8a8a"/><stop offset="0.5" stop-color="#b4b4b4"/><stop offset="1" stop-color="#8e8e8e"/></linearGradient></defs>
    <path d="M528.300 401.200 L 532 404.800 L 535.700 401.200" fill="none" stroke="#2a2a2a" stroke-width="1.300"/>
    <rect x="550" y="395" width="5.400" height="7.400" fill="#3c3c3c"/><rect x="552" y="396.400" width="1.400" height="1.600" fill="#55c060"/>
    <rect x="544.500" y="402.100" width="12.400" height="7.400" fill="#a2a2a2" stroke="#d6d6d6" stroke-width="0.800"/>
    <rect x="546.600" y="404.700" width="2" height="2" fill="#2c2c2c"/><rect x="552.800" y="404.700" width="2" height="2" fill="#2c2c2c"/>
    <path d="M549.300 418 L 552.700 421.400 L 549.300 424.800" fill="none" stroke="#8c8c8c" stroke-width="1.100"/>
    <path d="M565.200 417 L 568 417 L 574 412.400 L 574 427.600 L 568 423 L 565.200 423 Z" fill="url(#spk)"/>
    <path d="M549.300 436 L 552.700 439.400 L 549.300 442.800" fill="none" stroke="#8c8c8c" stroke-width="1.100"/>
    <path d="M565.200 435 L 568 435 L 574 430.400 L 574 445.600 L 568 441 L 565.200 441 Z" fill="url(#spk)"/>
  </svg>

<span class="t" style="left:29.5px;top:9.0px;font-size:12px;line-height:15px;color:#8a8a8a;transform:scaleX(0.9728)">Device Manager</span>
<span class="t" style="left:10.0px;top:36.6px;font-size:12px;line-height:15px;color:#000;transform:scaleX(0.9305)">File</span>
<span class="t" style="left:44.0px;top:36.6px;font-size:12px;line-height:15px;color:#000;transform:scaleX(0.9742)">Action</span>
<span class="t" style="left:93.0px;top:36.6px;font-size:12px;line-height:15px;color:#000;transform:scaleX(0.9303)">View</span>
<span class="t" style="left:133.0px;top:36.6px;font-size:12px;line-height:15px;color:#000;transform:scaleX(0.9519)">Help</span>
<span class="t" style="left:45.0px;top:88.0px;font-size:12px;line-height:15px;color:#000;transform:scaleX(0.9067)">Spectre</span>
<span class="t" style="left:64.0px;top:106.0px;font-size:12px;line-height:15px;color:#000;transform:scaleX(1.0105)">Audio inputs and outputs</span>
<span class="t" style="left:64.0px;top:124.0px;font-size:12px;line-height:15px;color:#000;transform:scaleX(0.9274)">Audio Processing Objects (APOs)</span>
  <div class="ring"></div>
</div>

<div id="dlg" class="win">
  <div class="abs" style="left:0;top:549.500px;width:642px;height:43px;background:#f0f0f0;border-top:1px solid #e4e4e4"></div>
  <div class="abs" style="left:485px;top:560.500px;width:68px;height:21px;box-sizing:border-box;border:1px solid #e6e6e6;border-radius:3px;background:#f4f4f4"></div>
  <div class="abs" style="left:562px;top:560.500px;width:68px;height:21px;box-sizing:border-box;border:1px solid #d2d2d2;border-radius:3px;background:#fdfdfd"></div>
  <!-- close -->
  <svg class="abs" style="left:619.500px;top:9.500px" width="11" height="11" viewBox="0 0 11 11" fill="none" stroke="#1a1a1a" stroke-width="1.200"><path d="M0.700 0.700l9.600 9.600M10.300 0.700l-9.600 9.600"/></svg>
  <!-- back -->
  <svg class="abs" style="left:8px;top:40px" width="14" height="12" viewBox="0 0 14 12" fill="none" stroke="#8f8f8f" stroke-width="1.200" stroke-linecap="round" stroke-linejoin="round"><path d="M13 6H1.500M6 1.500L1.500 6 6 10.500"/></svg>
  <!-- bluetooth -->
  <svg class="abs" style="left:39px;top:36.800px" width="12" height="17" viewBox="0 0 12 17"><ellipse cx="6" cy="8.500" rx="5.900" ry="8.300" fill="#1a84ea"/><path d="M3.100 5.500l5.500 5.500L6 13.500V3.500L8.600 6 3.100 11.500" fill="none" stroke="#fff" stroke-width="1.300" stroke-linejoin="round"/></svg>
  <!-- arrows -->
  <svg class="abs" style="left:70px;top:241.500px" width="16" height="12" viewBox="0 0 16 12" fill="none" stroke="#1a6fb5" stroke-width="1.200" stroke-linecap="round" stroke-linejoin="round"><path d="M1 6h13.500M10 1.500L14.500 6 10 10.500"/></svg>
  <svg class="abs" style="left:70px;top:346.500px" width="16" height="12" viewBox="0 0 16 12" fill="none" stroke="#1a6fb5" stroke-width="1.200" stroke-linecap="round" stroke-linejoin="round"><path d="M1 6h13.500M10 1.500L14.500 6 10 10.500"/></svg>
<span class="t" style="left:57.7px;top:39.8px;font-size:12px;line-height:15px;color:#000;transform:scaleX(0.9566)">Bluetooth File Transfer</span>
<span class="t" style="left:39.2px;top:87.5px;font-size:16px;line-height:20px;color:#1c398c;transform:scaleX(0.9994)">Transfer files using Bluetooth</span>
<span class="t" style="left:40.8px;top:130.7px;font-size:12px;line-height:15px;color:#000;transform:scaleX(0.9909)">You can use Bluetooth technology to transfer files wirelessly between this computer and a</span>
<span class="t" style="left:40.8px;top:147.0px;font-size:12px;line-height:15px;color:#000;transform:scaleX(1.0034)">Bluetooth device, or between this computer and another Bluetooth enabled computer.</span>
<span class="t" style="left:40.8px;top:190.8px;font-size:12px;line-height:15px;color:#000;transform:scaleX(0.9867)">To continue, select if you would like to send or receive files.</span>
<span class="t" style="left:92.5px;top:239.0px;font-size:16px;line-height:20px;color:#1a6fb5;transform:scaleX(0.9891)">Send files</span>
<span class="t" style="left:92.5px;top:261.4px;font-size:12px;line-height:15px;color:#2a8ad0;transform:scaleX(0.9961)">Make sure the computer or device where you plan to send the files is turned on and</span>
<span class="t" style="left:92.5px;top:278.0px;font-size:12px;line-height:15px;color:#2a8ad0;transform:scaleX(0.9812)">ready to receive them.</span>
<span class="t" style="left:92.5px;top:343.7px;font-size:16px;line-height:20px;color:#1a6fb5;transform:scaleX(0.9625)">Receive files</span>
<span class="t" style="left:92.5px;top:365.5px;font-size:12px;line-height:15px;color:#2a8ad0;transform:scaleX(0.9972)">This will allow your computer to receive files sent from another Bluetooth enabled</span>
<span class="t" style="left:92.5px;top:382.3px;font-size:12px;line-height:15px;color:#2a8ad0;transform:scaleX(1.0010)">computer or device.</span>
<span class="t" style="left:506.2px;top:564.6px;font-size:12px;line-height:15px;color:#a0a0a0;transform:scaleX(0.9722)">Next</span>
<span class="t" style="left:579.0px;top:564.6px;font-size:12px;line-height:15px;color:#000;transform:scaleX(0.9101)">Cancel</span>
  <div class="ring"></div>
</div>

</div>
</body></html>
